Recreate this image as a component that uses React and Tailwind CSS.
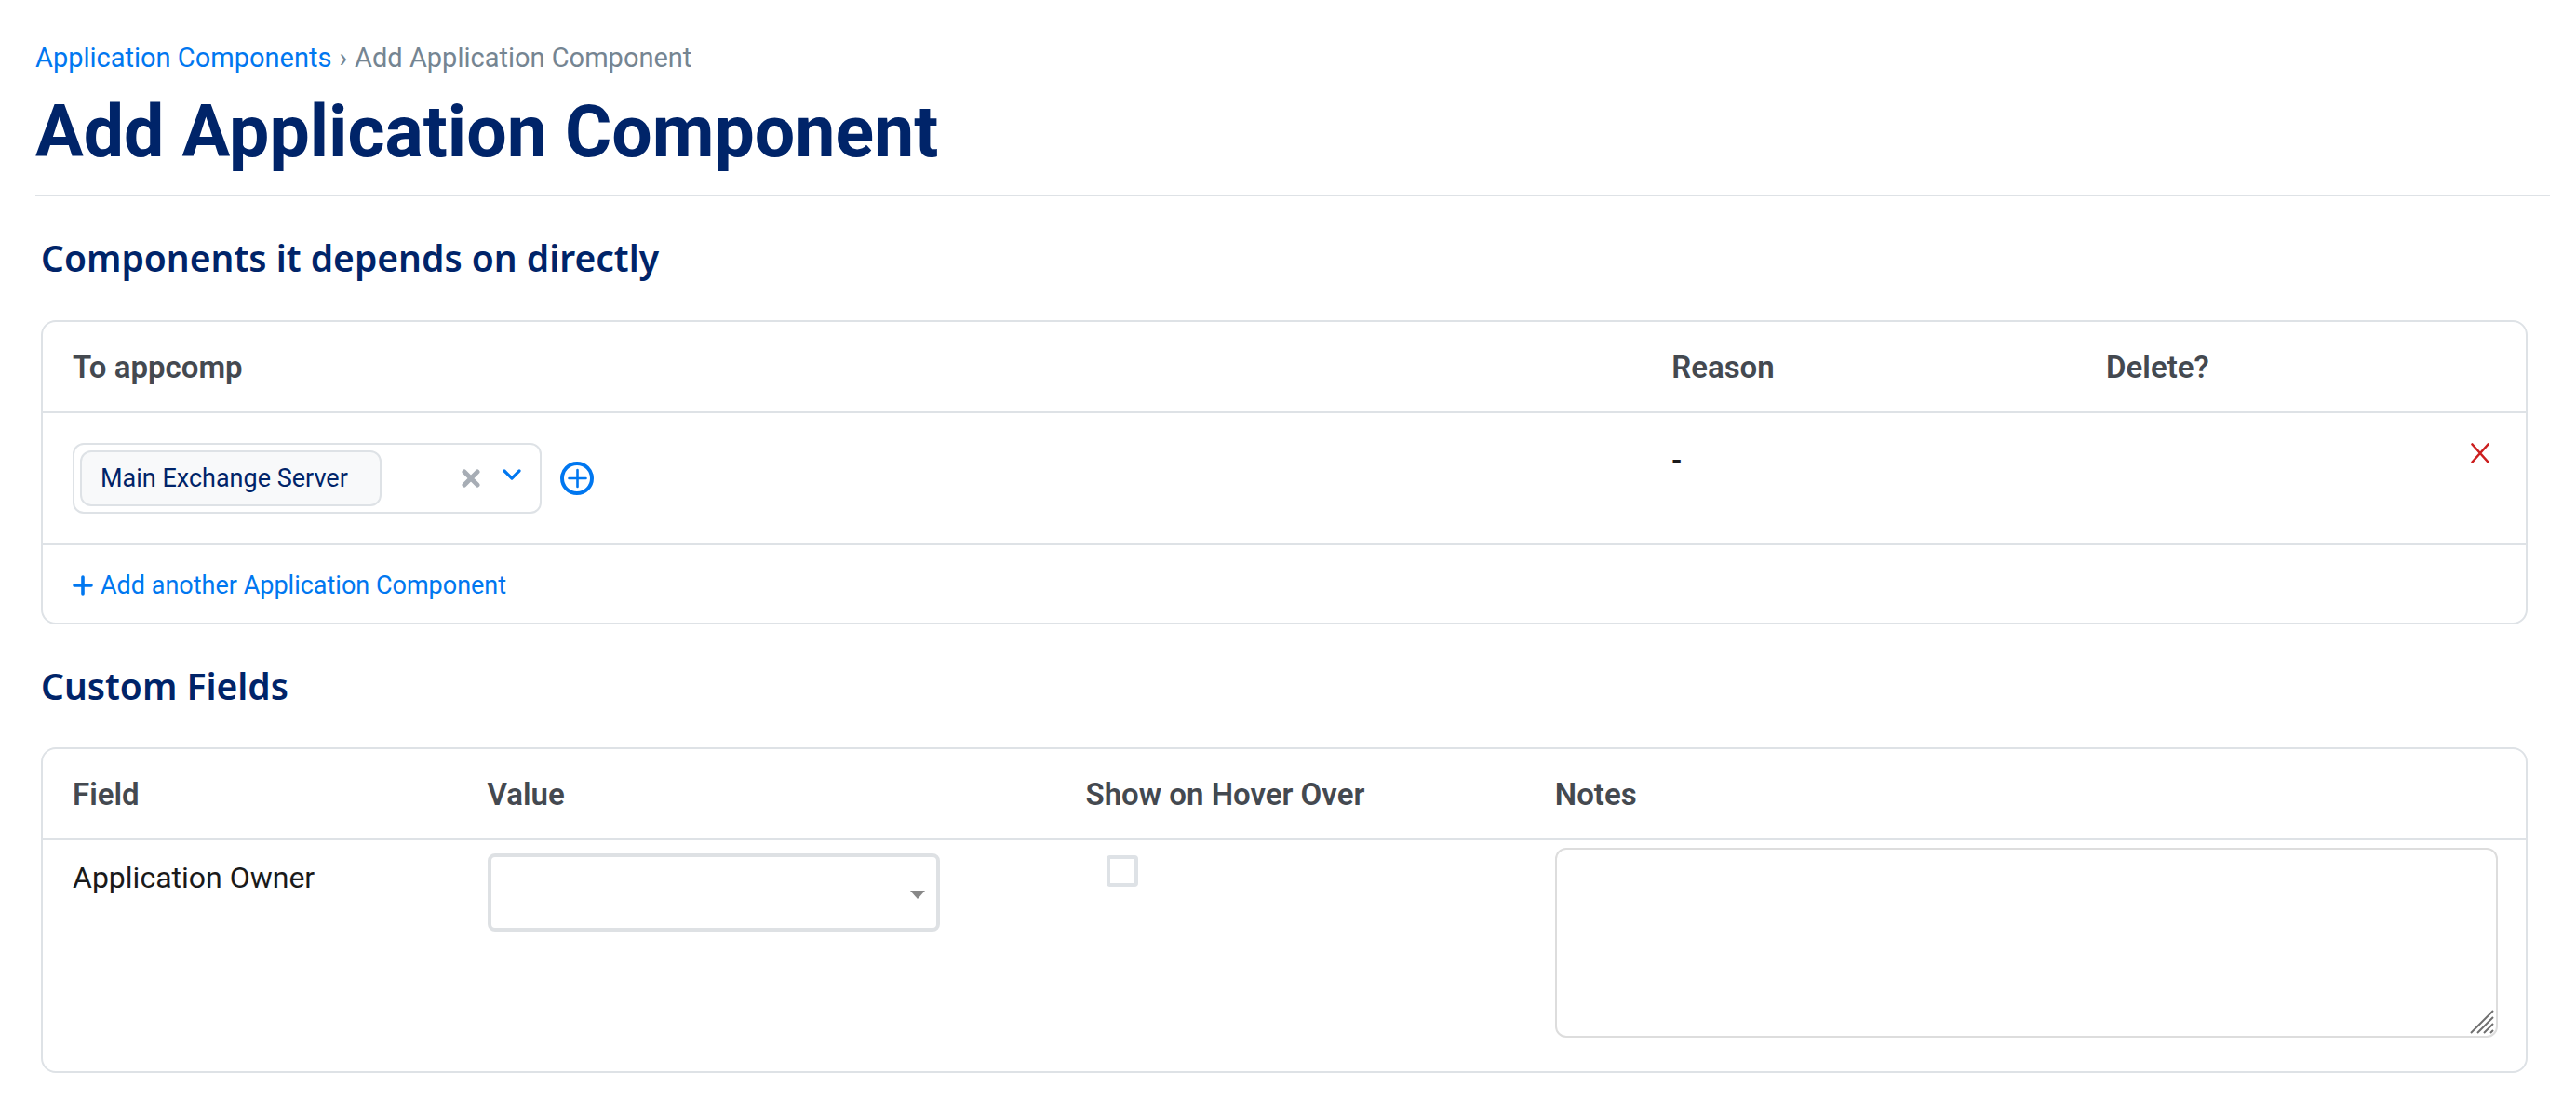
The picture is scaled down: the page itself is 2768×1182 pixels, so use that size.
function Card({ children }) {
  return <div className="overflow-hidden rounded-2xl border-2 border-[#dee2e6]">{children}</div>;
}

function SectionTitle({ id, children }) {
  return (
    <h2 id={id} className="font-['Noto_Sans',sans-serif] text-[39px] leading-[56px] font-semibold text-[#002469]">
      {children}
    </h2>
  );
}

function HeadCell({ className = "", children }) {
  return (
    <th scope="col" className={`h-24 px-8 pt-0.5 text-left align-middle text-[33px] leading-[48px] font-semibold text-[#444950] ${className}`}>
      {children}
    </th>
  );
}

function ComponentPicker() {
  return (
    <div className="flex items-center gap-5">
      <div className="flex h-[76px] w-[504px] items-center rounded-xl border-2 border-[#dee2e6] bg-white pl-1.5 pr-5">
        <span className="flex h-[60px] w-[324px] items-center rounded-xl border-2 border-[#dee2e6] bg-[#f8f9fa] px-5 text-[27px] leading-10 whitespace-nowrap text-[#002469]">
          Main Exchange Server
        </span>
        <button type="button" aria-label="Clear selection" className="ml-auto text-[#a7adb5]">
          <svg width="20" height="20" viewBox="0 0 20 20" fill="none" stroke="currentColor" strokeWidth="5" strokeLinecap="round">
            <path d="M3 3 17 17M17 3 3 17" />
          </svg>
        </button>
        <button type="button" aria-label="Open component list" className="mb-2 ml-6 text-[#0077f0]">
          <svg width="20" height="12" viewBox="0 0 20 12" fill="none" stroke="currentColor" strokeWidth="3.2" strokeLinecap="round" strokeLinejoin="round">
            <path d="M2 2 10 10 18 2" />
          </svg>
        </button>
      </div>
      <button type="button" aria-label="Create new component" className="text-[#0077f0]">
        <svg width="36" height="36" viewBox="0 0 36 36" fill="none" stroke="currentColor" strokeLinecap="round">
          <circle cx="18" cy="18" r="16" strokeWidth="4" />
          <path d="M9.500 18H27.500M18.500 9V27" strokeWidth="2.600" />
        </svg>
      </button>
    </div>
  );
}

function Dependencies() {
  return (
    <section aria-labelledby="dependencies" className="mt-[38px] mr-6 ml-1.5">
      <SectionTitle id="dependencies">Components it depends on directly</SectionTitle>
      <div className="mt-[39px]">
        <Card>
          <table className="w-full table-fixed border-separate border-spacing-0">
            <thead>
              <tr>
                <HeadCell className="w-[64.4%]">To appcomp</HeadCell>
                <HeadCell className="w-[17.5%]">Reason</HeadCell>
                <HeadCell>Delete?</HeadCell>
              </tr>
            </thead>
            <tbody>
              <tr className="align-top">
                <td className="border-t-2 border-[#dee2e6] px-8 py-8">
                  <ComponentPicker />
                </td>
                <td className="border-t-2 border-[#dee2e6] px-8 pt-[26px] text-[32px] leading-[48px] font-medium text-[#1a1a1a]">-</td>
                <td className="border-t-2 border-[#dee2e6] px-8 py-8">
                  <div className="flex justify-end pr-[7px]">
                    <button type="button" aria-label="Delete row" className="text-[#cc1f1f]">
                      <svg width="20" height="22" viewBox="0 0 20 22" fill="none" stroke="currentColor" strokeWidth="2.6" strokeLinecap="round">
                        <path d="M1.5 1.5 18.5 20.5M18.5 1.5 1.5 20.5" />
                      </svg>
                    </button>
                  </div>
                </td>
              </tr>
              <tr>
                <td colSpan={3} className="h-[85px] border-t-2 border-[#dee2e6] px-8 pt-0.5 align-middle">
                  <a href="#add" className="inline-flex items-center gap-2 align-middle text-[27px] leading-10 text-[#0077f0]">
                    <svg width="22" height="22" viewBox="0 0 22 22" fill="none" stroke="currentColor" strokeWidth="3.6" strokeLinecap="round">
                      <path d="M2 11H20M11 2V20" />
                    </svg>
                    Add another Application Component
                  </a>
                </td>
              </tr>
            </tbody>
          </table>
        </Card>
      </div>
    </section>
  );
}

function CustomFields() {
  return (
    <section aria-labelledby="custom-fields" className="mt-[38px] mr-6 ml-1.5">
      <SectionTitle id="custom-fields">Custom Fields</SectionTitle>
      <div className="mt-[38px]">
        <Card>
          <table className="w-full table-fixed border-separate border-spacing-0">
            <thead>
              <tr>
                <HeadCell className="w-[16.7%]">Field</HeadCell>
                <HeadCell className="w-[24.1%]">Value</HeadCell>
                <HeadCell className="w-[18.9%]">Show on Hover Over</HeadCell>
                <HeadCell>Notes</HeadCell>
              </tr>
            </thead>
            <tbody>
              <tr className="align-top">
                <td className="border-t-2 border-[#dee2e6] px-8 pt-4">
                  <label htmlFor="owner" className="block text-[32px] leading-[48px] text-[#1a1a1a]">
                    Application Owner
                  </label>
                </td>
                <td className="border-t-2 border-[#dee2e6] px-8 pt-3.5">
                  <div className="relative w-[486px]">
                    <select id="owner" className="block h-[84px] w-full appearance-none rounded-lg border-4 border-[#dee1e4] bg-white px-4 text-[32px]" defaultValue="">
                      <option value="" />
                    </select>
                    <svg className="pointer-events-none absolute top-10 right-4" width="16" height="9" viewBox="0 0 16 9" fill="#888888">
                      <path d="M0 0H16L8 9Z" />
                    </svg>
                  </div>
                </td>
                <td className="border-t-2 border-[#dee2e6] px-8 pt-4">
                  <input type="checkbox" aria-label="Show Application Owner on hover over" className="ml-[22px] block size-[34px] appearance-none rounded-sm border-4 border-[#dee2e6] bg-white checked:bg-[#0077f0]" />
                </td>
                <td className="border-t-2 border-[#dee2e6] pt-2 pr-[30px] pb-9 pl-8">
                  <div className="relative">
                    <textarea aria-label="Notes" className="block h-[204px] w-full resize-none rounded-xl border-2 border-[#dddddd] bg-white p-4 text-[32px]" />
                    <svg className="pointer-events-none absolute right-1 bottom-1" width="26" height="26" viewBox="0 0 26 26" fill="none" stroke="#707070" strokeWidth="2">
                      <path d="M1 25 25 1M8 25 25 8M15 25 25 15M22 25 25 22" />
                    </svg>
                  </div>
                </td>
              </tr>
            </tbody>
          </table>
        </Card>
      </div>
    </section>
  );
}

export default function App() {
  return (
    <main className="min-h-screen bg-white pt-[42px] pr-7 pb-7 pl-[38px] font-['Roboto',sans-serif]">
      <header className="border-b-2 border-[#dee2e6] pb-[19px]">
        <nav aria-label="Breadcrumb" className="flex gap-2 text-[29px] leading-10 text-[#758592]">
          <a href="#components" className="text-[#0077f0]">Application Components</a>
          <span aria-hidden="true">›</span>
          <span aria-current="page">Add Application Component</span>
        </nav>
        <h1 className="mt-3 text-[77px] leading-[96px] font-bold text-[#002469]">Add Application Component</h1>
      </header>
      <Dependencies />
      <CustomFields />
    </main>
  );
}
